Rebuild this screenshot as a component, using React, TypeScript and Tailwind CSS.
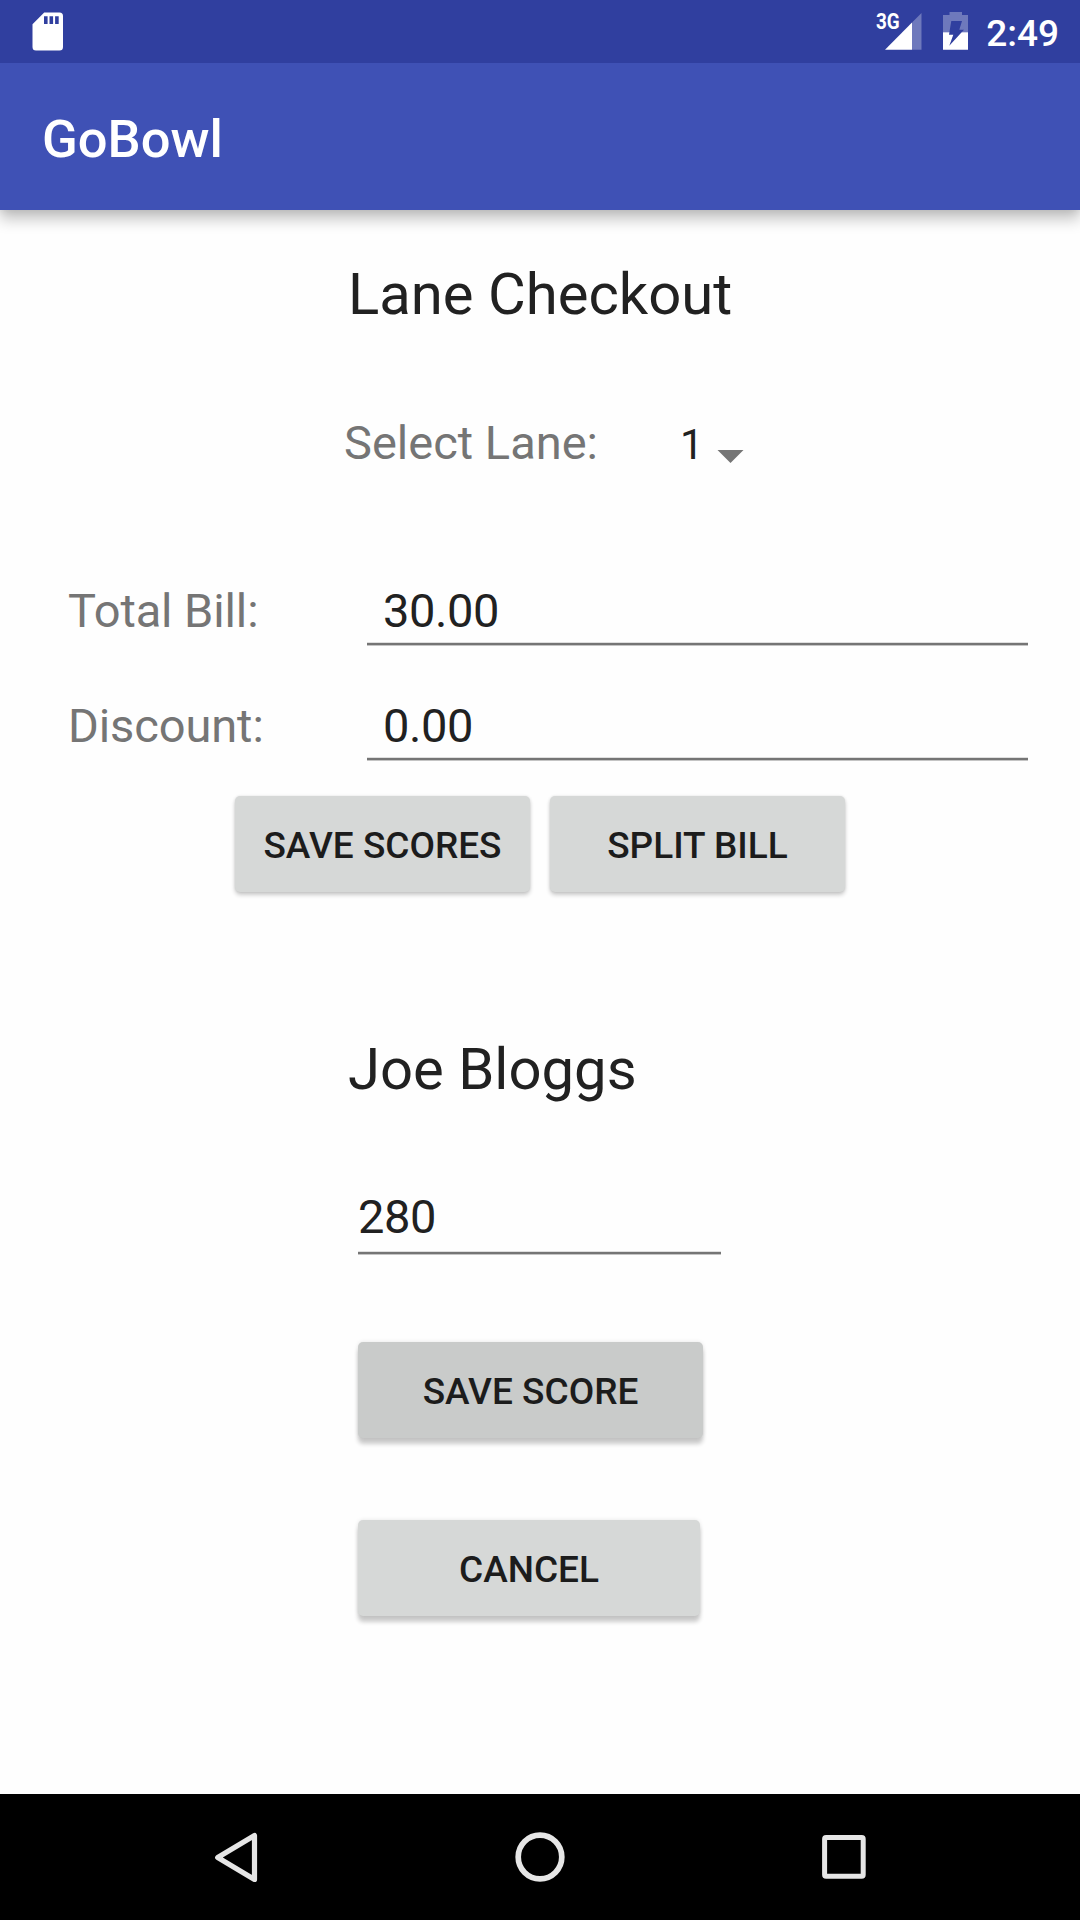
import type { ReactNode } from "react";

const BATTERY =
  "M6.5 0H19v3h6v34.7H0V3h6.5zM8.3 9 6 22.7H10.300L6.300 33.800 21 17.700H16.300L19 9z";

function StatusBar() {
  return (
    <div className="relative z-10 flex h-[63px] items-start justify-between bg-[#303f9f] pr-[21px] pl-[32px] text-white">
      <svg className="mt-[12px]" width="32" height="39" viewBox="0 0 32 39">
        <path
          fill="#fff"
          fillRule="evenodd"
          d="M12.2.5H27.5a3.5 3.5 0 0 1 3.5 3.5V35a3.5 3.5 0 0 1-3.5 3.5H4A3.5 3.5 0 0 1 .5 35V12.2zM12 4.3v7.7h3.6V4.3zM17.5 4.3v7.7h3.6V4.3zM23.1 4.3v7.7h3.6V4.3z"
        />
      </svg>
      <div className="flex items-start">
        <span className="mt-[9px] mr-[-15px] h-[24px] w-[24px] origin-left scale-x-[0.84] text-[22.5px] leading-[24px] font-bold">
          3G
        </span>
        <svg className="mt-[12px]" width="37" height="38" viewBox="0 0 37 38">
          <path fill="#fff" fillOpacity=".3" d="M27 10.5 36.5 1v36.7H27z" />
          <path fill="#fff" d="M0 37.7 27 10.5v27.2z" />
        </svg>
        <svg className="mt-[12px] ml-[21px]" width="26" height="38" viewBox="0 0 26 38">
          <clipPath id="empty">
            <rect width="26" height="20.3" />
          </clipPath>
          <clipPath id="charged">
            <rect y="20.3" width="26" height="18" />
          </clipPath>
          <path fill="#fff" fillOpacity=".3" fillRule="evenodd" clipPath="url(#empty)" d={BATTERY} />
          <path fill="#fff" fillRule="evenodd" clipPath="url(#charged)" d={BATTERY} />
        </svg>
        <span className="mt-[12px] ml-[17px] text-[37px] leading-[43px] font-medium">2:49</span>
      </div>
    </div>
  );
}

function AppBar() {
  return (
    <header className="relative flex h-[147px] items-center bg-[#3f51b5] pl-[42px] shadow-[0_9px_14px_0px_rgba(0,0,0,0.24),0_0px_8px_0px_rgba(0,0,0,0.1)]">
      <h1 className="mt-[5px] text-[52.5px] leading-[62px] font-medium text-white">GoBowl</h1>
    </header>
  );
}

function Underline({ className }: { className: string }) {
  return (
    <div className={"h-[4px] border-y border-t-[#dfdfdf] border-b-[#c4c4c4] bg-[#757575] " + className} />
  );
}

function BillRow({ label, value }: { label: string; value: string }) {
  return (
    <div className="flex h-[115px] items-start text-[47px] leading-[56px]">
      <label className="ml-[68px] w-[299px] tracking-[-0.1px] text-[#757575]">{label}</label>
      <div className="w-[661px]">
        <input
          aria-label={label}
          defaultValue={value}
          className="block h-[56px] w-full bg-transparent pl-[16px] tracking-[-0.4px] text-[#212121] outline-none"
        />
        <Underline className="mt-[3px] w-full" />
      </div>
    </div>
  );
}

function RaisedButton({ className, children }: { className: string; children: ReactNode }) {
  return (
    <button
      className={
        "flex h-[96px] items-center justify-center rounded-[5px] pt-[3px] text-[37px] leading-[44px] font-medium whitespace-nowrap text-[#1c1c1c] " +
        className
      }
    >
      {children}
    </button>
  );
}

function NavBar() {
  return (
    <nav className="flex h-[126px] items-center justify-between bg-black pr-[207px] pl-[207px]">
      <svg width="58" height="58" viewBox="0 0 58 58" fill="none" stroke="#e6e6e6">
        <path d="M47.500 7.600v43.800L10.700 29.500z" strokeWidth="5.200" strokeLinejoin="round" />
      </svg>
      <svg width="58" height="58" viewBox="0 0 58 58" fill="none" stroke="#e6e6e6">
        <circle cx="29" cy="29" r="21.800" strokeWidth="5.700" />
      </svg>
      <svg width="58" height="58" viewBox="0 0 58 58" fill="none" stroke="#e6e6e6">
        <rect x="9.600" y="9.600" width="38.600" height="38.600" rx="1.500" strokeWidth="5" />
      </svg>
    </nav>
  );
}

export default function App() {
  return (
    <div className="flex h-[1920px] w-[1080px] flex-col overflow-hidden bg-[#fefefe] font-[Roboto,sans-serif]">
      <StatusBar />
      <AppBar />
      <main className="flex-1">
        <h2 className="mt-[50px] ml-[348px] text-[58px] leading-[68px] text-[#212121]">Lane Checkout</h2>
        <div className="mt-[87px] ml-[344px] flex h-[56px] items-start">
          <span className="w-[336px] text-[47px] leading-[56px] text-[#757575]">Select Lane:</span>
          <span className="mt-[2px] w-[37px] text-[42px] leading-[56px] text-[#212121]">1</span>
          <svg className="mt-[35px]" width="28" height="14" viewBox="0 0 28 14">
            <path fill="#757575" d="M.5 0h26L13.500 13z" />
          </svg>
        </div>
        <div className="mt-[112px]">
          <BillRow label="Total Bill:" value="30.00" />
          <BillRow label="Discount:" value="0.00" />
        </div>
        <div className="mt-[-17px] ml-[235px] flex gap-[20px]">
          <RaisedButton className="w-[295px] bg-[#d6d8d7] shadow-[0_3px_4px_0px_rgba(0,0,0,0.2),0_0_3px_rgba(0,0,0,0.1)]">
            SAVE SCORES
          </RaisedButton>
          <RaisedButton className="w-[295px] bg-[#d6d8d7] shadow-[0_3px_4px_0px_rgba(0,0,0,0.2),0_0_3px_rgba(0,0,0,0.1)]">
            SPLIT BILL
          </RaisedButton>
        </div>
        <h2 className="mt-[143px] ml-[348px] text-[58px] leading-[68px] text-[#212121]">Joe Bloggs</h2>
        <input
          aria-label="Score"
          defaultValue="280"
          className="mt-[86px] ml-[358px] block h-[56px] w-[363px] bg-transparent text-[47px] leading-[56px] tracking-[-0.4px] text-[#212121] outline-none"
        />
        <Underline className="mt-[6px] ml-[358px] w-[363px]" />
        <RaisedButton className="mt-[87px] ml-[358px] w-[345px] bg-[#c9cbca] shadow-[0_6px_4px_0px_rgba(0,0,0,0.2),0_0_4px_rgba(0,0,0,0.1)]">
          SAVE SCORE
        </RaisedButton>
        <RaisedButton className="mt-[82px] ml-[358px] w-[342px] bg-[#d6d8d7] shadow-[0_6px_4px_0px_rgba(0,0,0,0.2),0_0_4px_rgba(0,0,0,0.1)]">
          CANCEL
        </RaisedButton>
      </main>
      <NavBar />
    </div>
  );
}
